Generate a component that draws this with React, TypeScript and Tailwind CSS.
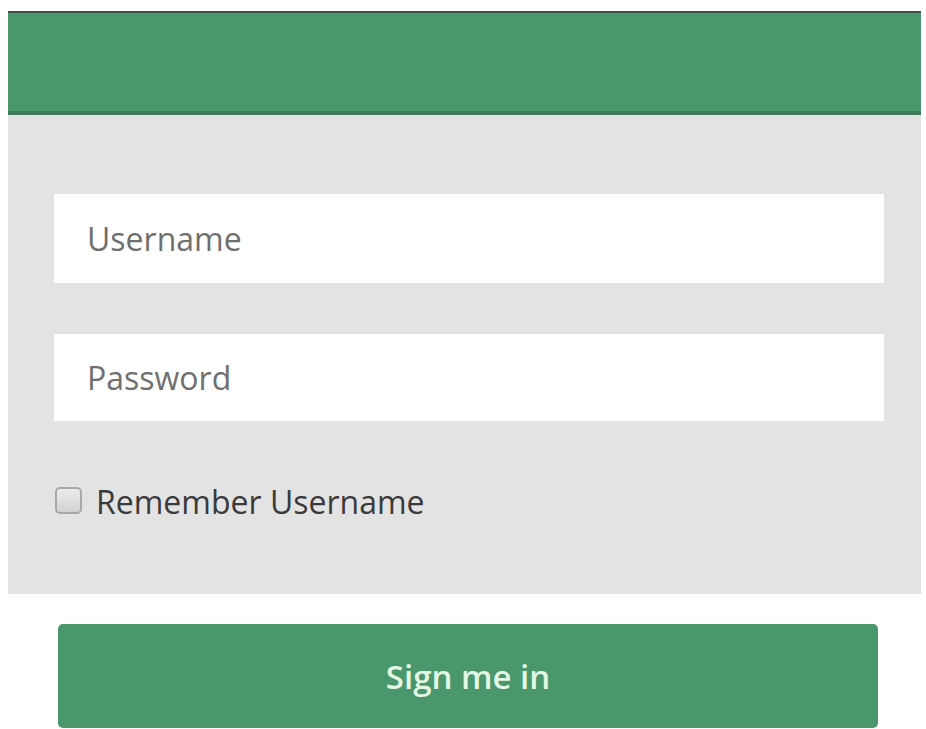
import React from "react";

export default function App() {
  return (
    <div className="w-[926px] h-[729px] bg-white pt-[11px] overflow-hidden" style={{ fontFamily: '"Open Sans", "Liberation Sans", sans-serif' }}>
      <div className="ml-[8px] w-[913px] flex flex-col">
        <div className="h-[104px] bg-[#4a976d] border-t-[2px] border-t-[#3d4d44] border-b-[4px] border-b-[#3f7b5a]" />
        <div className="bg-[#e3e3e3] h-[479px] pl-[46px] pr-[37px] pt-[79px] flex flex-col">
          <div className="h-[89px] bg-white flex items-center pl-[33px] text-[32px] text-[#6f6f6f]">Username</div>
          <div className="h-[87px] mt-[51px] bg-white flex items-center pl-[33px] text-[32px] text-[#6f6f6f]">Password</div>
          <div className="mt-[65px] flex items-center">
            <div className="w-[27px] h-[27px] ml-[1px] -mt-[4px] rounded-[5px] border-[2px] border-[#a8a8a8] bg-gradient-to-b from-[#ececec] to-[#d2d2d2]" />
            <span className="ml-[14px] text-[32px] text-[#3a3a3a] leading-none">Remember Username</span>
          </div>
        </div>
      </div>
      <div className="ml-[58px] mt-[30px] w-[820px] h-[104px] rounded-[5px] bg-[#4a976d] flex items-center justify-center">
        <span className="text-[33px] font-semibold text-[#e4f7e4] leading-none">Sign me in</span>
      </div>
    </div>
  );
}
